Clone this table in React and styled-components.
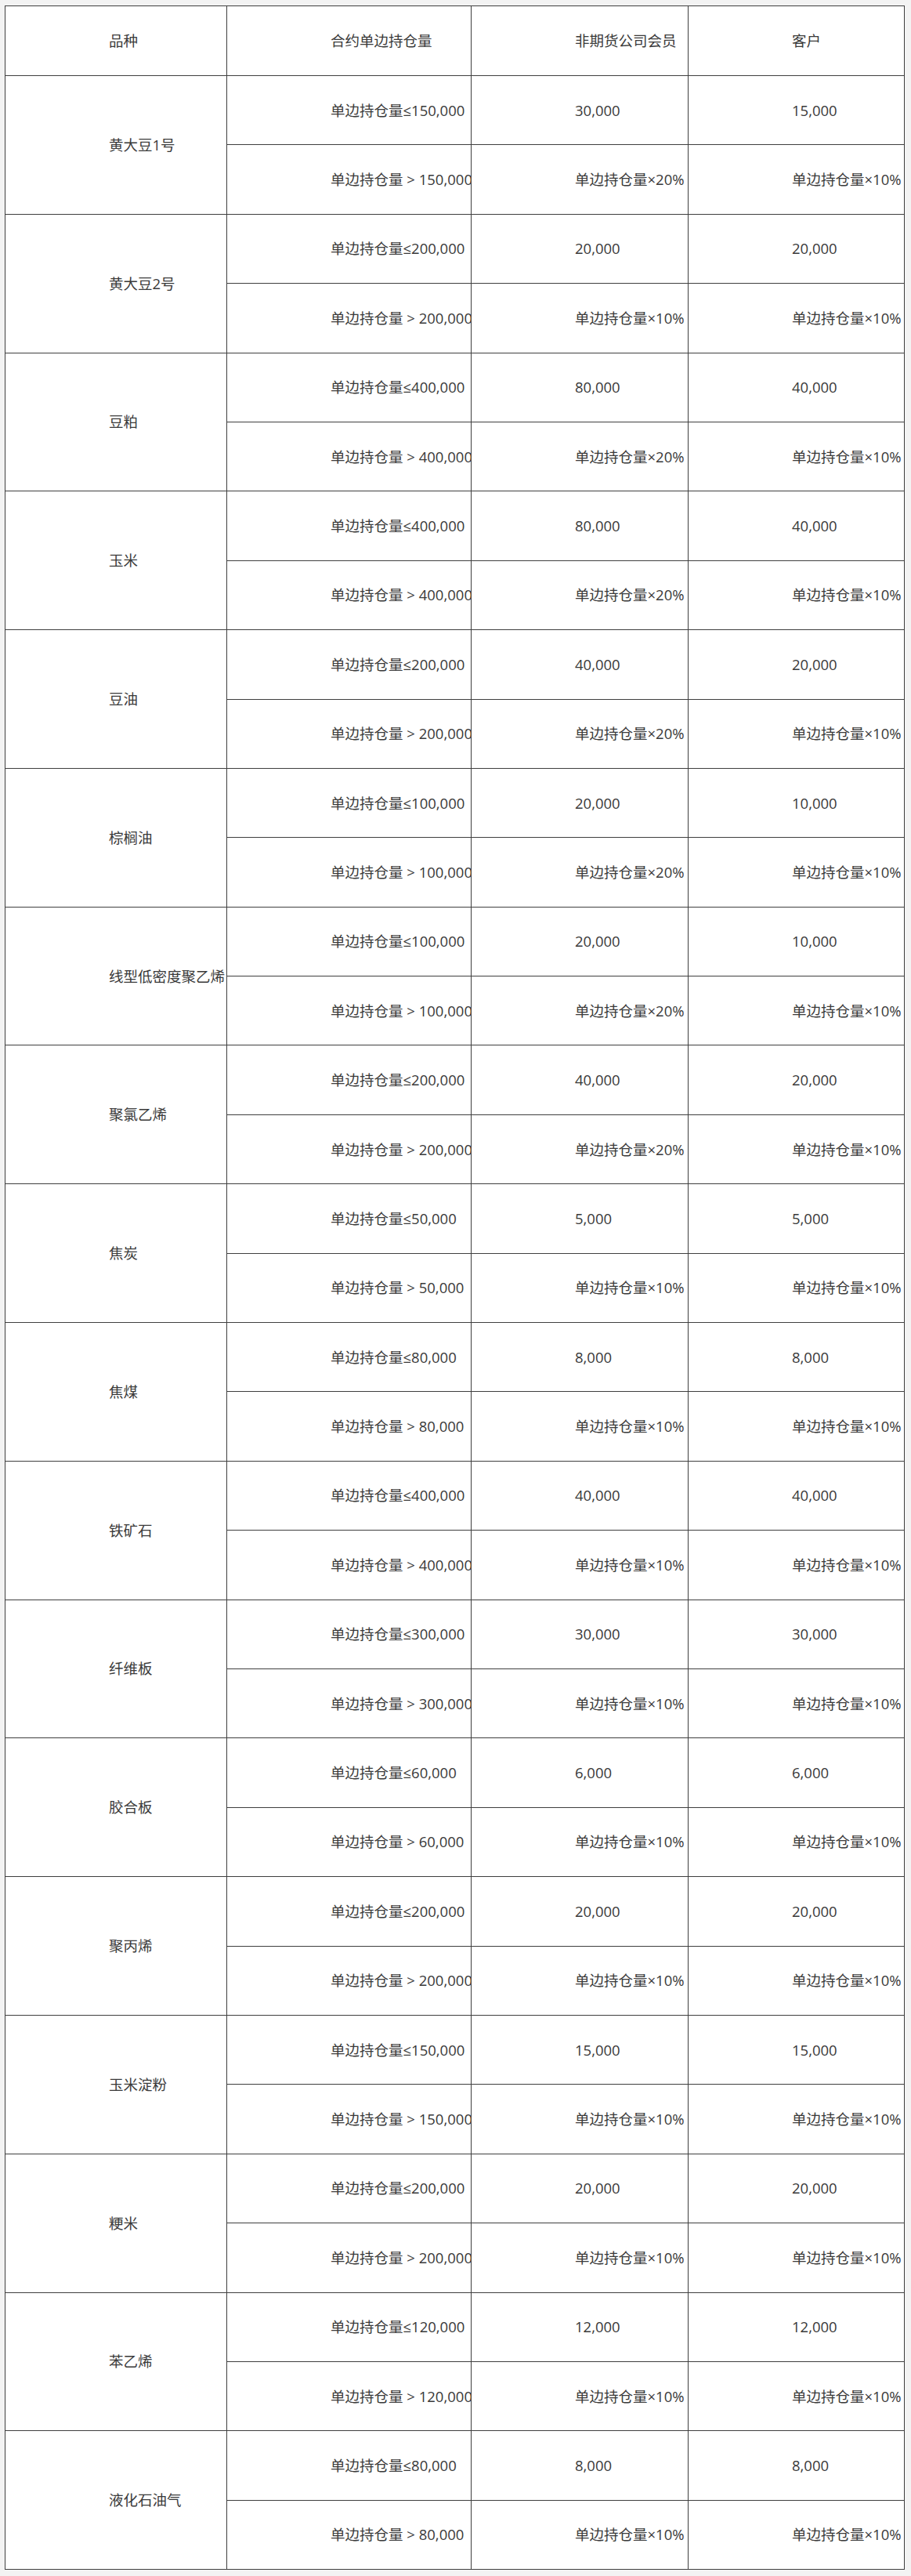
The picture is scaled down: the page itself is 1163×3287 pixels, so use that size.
import React from "react";
import styled, { createGlobalStyle } from "styled-components";

const Global = createGlobalStyle`
  html, body { margin: 0; padding: 0; background: #f3f3f3; }
  body { font-family: "Open Sans", "Noto Sans CJK SC", sans-serif; }
`;

const Page = styled.div`
  padding: 7px 9px 9px 6px;
  background: #f3f3f3;
`;

const Table = styled.table`
  border-collapse: collapse;
  table-layout: fixed;
  width: 1148px;
  background: #ffffff;
  color: #3a3a3a;
  font-size: 18.5px;
`;

const Row = styled.tr`
  height: ${(p) => (p.$head ? "89px" : "88.4px")};
`;

const Cell = styled.td`
  border: 1px solid #3f3f3f;
  padding: 0 0 0 132px;
  text-align: left;
  vertical-align: middle;
  white-space: nowrap;
  overflow: hidden;
  font-weight: 400;
  line-height: 1.3;
`;

const HeadCell = styled(Cell).attrs({ as: "th" })``;

const data = [
  ["黄大豆1号", "150,000", "30,000", "15,000", "20%", "10%"],
  ["黄大豆2号", "200,000", "20,000", "20,000", "10%", "10%"],
  ["豆粕", "400,000", "80,000", "40,000", "20%", "10%"],
  ["玉米", "400,000", "80,000", "40,000", "20%", "10%"],
  ["豆油", "200,000", "40,000", "20,000", "20%", "10%"],
  ["棕榈油", "100,000", "20,000", "10,000", "20%", "10%"],
  ["线型低密度聚乙烯", "100,000", "20,000", "10,000", "20%", "10%"],
  ["聚氯乙烯", "200,000", "40,000", "20,000", "20%", "10%"],
  ["焦炭", "50,000", "5,000", "5,000", "10%", "10%"],
  ["焦煤", "80,000", "8,000", "8,000", "10%", "10%"],
  ["铁矿石", "400,000", "40,000", "40,000", "10%", "10%"],
  ["纤维板", "300,000", "30,000", "30,000", "10%", "10%"],
  ["胶合板", "60,000", "6,000", "6,000", "10%", "10%"],
  ["聚丙烯", "200,000", "20,000", "20,000", "10%", "10%"],
  ["玉米淀粉", "150,000", "15,000", "15,000", "10%", "10%"],
  ["粳米", "200,000", "20,000", "20,000", "10%", "10%"],
  ["苯乙烯", "120,000", "12,000", "12,000", "10%", "10%"],
  ["液化石油气", "80,000", "8,000", "8,000", "10%", "10%"],
];

export default function App() {
  return (
    <Page>
      <Global />
      <Table>
        <colgroup>
          <col style={{ width: "283px" }} />
          <col style={{ width: "312px" }} />
          <col style={{ width: "277px" }} />
          <col style={{ width: "276px" }} />
        </colgroup>
        <thead>
          <Row $head>
            <HeadCell>品种</HeadCell>
            <HeadCell>合约单边持仓量</HeadCell>
            <HeadCell>非期货公司会员</HeadCell>
            <HeadCell>客户</HeadCell>
          </Row>
        </thead>
        <tbody>
          {data.map(([name, limit, member, client, mp, cp]) => (
            <React.Fragment key={name}>
              <Row>
                <Cell rowSpan={2}>{name}</Cell>
                <Cell>单边持仓量≤{limit}</Cell>
                <Cell>{member}</Cell>
                <Cell>{client}</Cell>
              </Row>
              <Row>
                <Cell>单边持仓量 &gt; {limit}</Cell>
                <Cell>单边持仓量×{mp}</Cell>
                <Cell>单边持仓量×{cp}</Cell>
              </Row>
            </React.Fragment>
          ))}
        </tbody>
      </Table>
    </Page>
  );
}
